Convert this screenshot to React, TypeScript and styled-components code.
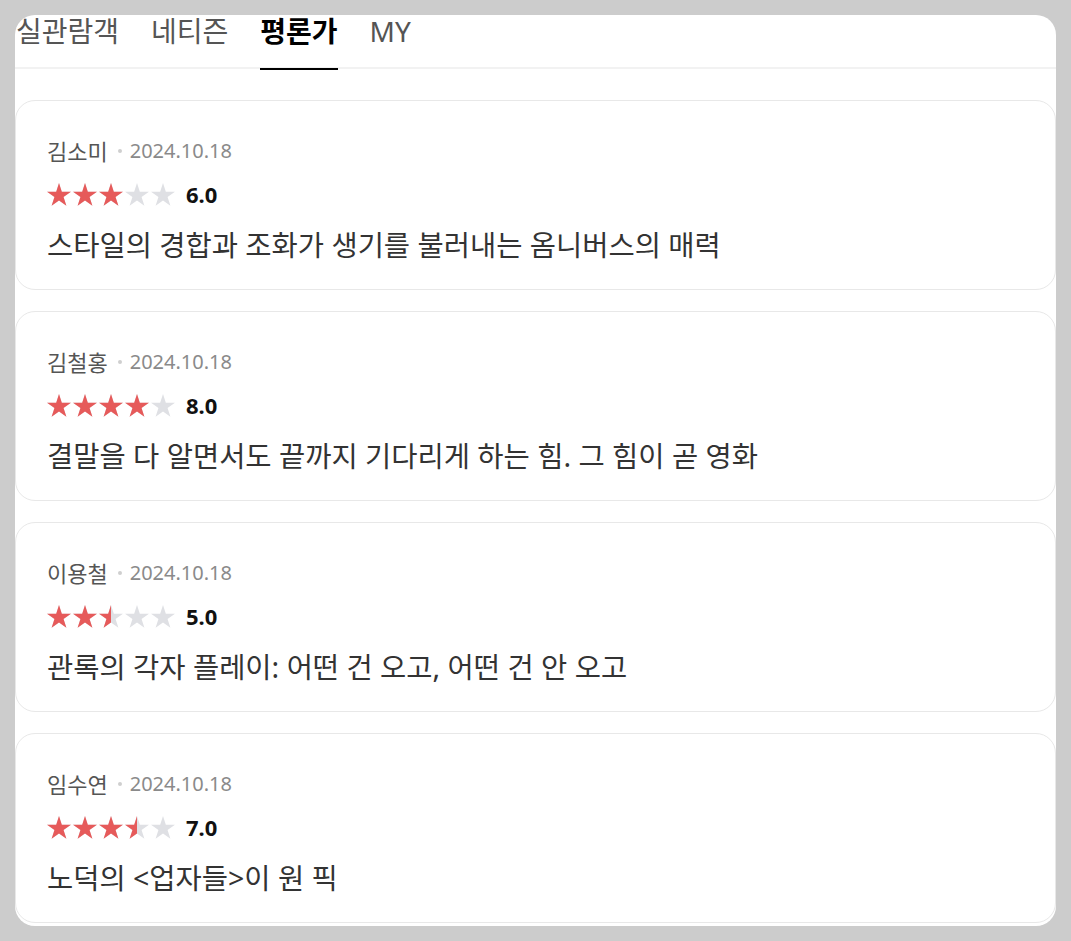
import React, { useId } from "react";
import styled, { createGlobalStyle } from "styled-components";

const GlobalStyle = createGlobalStyle`
  html, body {
    margin: 0;
    padding: 0;
    background: #cccccc;
  }
  body {
    font-family: "Noto Sans", "Noto Sans CJK KR", sans-serif;
  }
  * { box-sizing: border-box; }
`;

const Page = styled.div`
  padding: 15px;
  height: 941px;
`;

const Panel = styled.div`
  background: #ffffff;
  border-radius: 20px;
  height: 911px;
  display: flex;
  flex-direction: column;
`;

const TabBar = styled.nav`
  display: flex;
  align-items: flex-start;
  gap: 32px;
  height: 54px;
  padding-left: 1px;
  border-bottom: 2px solid #f2f2f2;
  flex-shrink: 0;
`;

const Tab = styled.div<{ $active?: boolean }>`
  font-size: 28px;
  line-height: 33px;
  height: 55px;
  padding-bottom: 20px;
  color: ${(p) => (p.$active ? "#000000" : "#555555")};
  font-weight: ${(p) => (p.$active ? 700 : 400)};
  border-bottom: 2px solid ${(p) => (p.$active ? "#000000" : "transparent")};
  white-space: nowrap;
  cursor: pointer;
`;

const List = styled.div`
  display: flex;
  flex-direction: column;
  gap: 21px;
  padding-top: 31px;
`;

const Card = styled.article`
  border: 1px solid #e8e8e8;
  border-radius: 20px;
  padding: 35px 31px 25px;
  background: #ffffff;
`;

const Meta = styled.div`
  display: flex;
  align-items: center;
  height: 30px;
  line-height: 30px;
`;

const Name = styled.span`
  font-size: 22px;
  color: #555555;
`;

const Dot = styled.span`
  width: 4px;
  height: 4px;
  border-radius: 50%;
  background: #cfcfcf;
  margin: 0 8px 0 10px;
`;

const DateText = styled.span`
  font-size: 20px;
  color: #8a8a8a;
`;

const RatingRow = styled.div`
  display: flex;
  align-items: center;
  height: 24px;
  margin-top: 16px;
`;

const Stars = styled.div`
  display: flex;
  gap: 2px;
`;

const StarSvg = styled.svg`
  width: 24px;
  height: 23px;
  display: block;
`;

const Score = styled.span`
  margin-left: 11px;
  font-size: 22px;
  line-height: 24px;
  font-weight: 700;
  color: #111111;
`;

const Review = styled.p`
  margin: 20px 0 0;
  font-size: 28.5px;
  line-height: 38px;
  color: #333333;
  white-space: nowrap;
`;

const STAR_POINTS =
  "12,0 14.83,8.71 23.98,8.71 16.57,14.09 19.41,22.79 12,17.41 4.59,22.79 7.43,14.09 0.02,8.71 9.17,8.71";

function Star({ fill }: { fill: number }) {
  const id = useId().replace(/:/g, "");
  return (
    <StarSvg viewBox="0 0 24 23">
      <defs>
        <clipPath id={`c${id}`}>
          <rect x="0" y="0" width={24 * fill} height="23" />
        </clipPath>
      </defs>
      <polygon points={STAR_POINTS} fill="#dfe0e4" />
      {fill > 0 && (
        <polygon points={STAR_POINTS} fill="#e65a5a" clipPath={`url(#c${id})`} />
      )}
    </StarSvg>
  );
}

function StarRating({ score }: { score: number }) {
  const value = score / 2;
  return (
    <Stars>
      {[0, 1, 2, 3, 4].map((i) => (
        <Star key={i} fill={Math.max(0, Math.min(1, value - i))} />
      ))}
    </Stars>
  );
}

const reviews = [
  { name: "김소미", date: "2024.10.18", score: 6, text: "스타일의 경합과 조화가 생기를 불러내는 옴니버스의 매력" },
  { name: "김철홍", date: "2024.10.18", score: 8, text: "결말을 다 알면서도 끝까지 기다리게 하는 힘. 그 힘이 곧 영화" },
  { name: "이용철", date: "2024.10.18", score: 5, text: "관록의 각자 플레이: 어떤 건 오고, 어떤 건 안 오고" },
  { name: "임수연", date: "2024.10.18", score: 7, text: "노덕의 <업자들>이 원 픽" },
];

const tabs = ["실관람객", "네티즌", "평론가", "MY"];

export default function App() {
  return (
    <>
      <GlobalStyle />
      <Page>
        <Panel>
          <TabBar>
            {tabs.map((t) => (
              <Tab key={t} $active={t === "평론가"}>
                {t}
              </Tab>
            ))}
          </TabBar>
          <List>
            {reviews.map((r) => (
              <Card key={r.name}>
                <Meta>
                  <Name>{r.name}</Name>
                  <Dot />
                  <DateText>{r.date}</DateText>
                </Meta>
                <RatingRow>
                  <StarRating score={r.score} />
                  <Score>{r.score.toFixed(1)}</Score>
                </RatingRow>
                <Review>{r.text}</Review>
              </Card>
            ))}
          </List>
        </Panel>
      </Page>
    </>
  );
}
